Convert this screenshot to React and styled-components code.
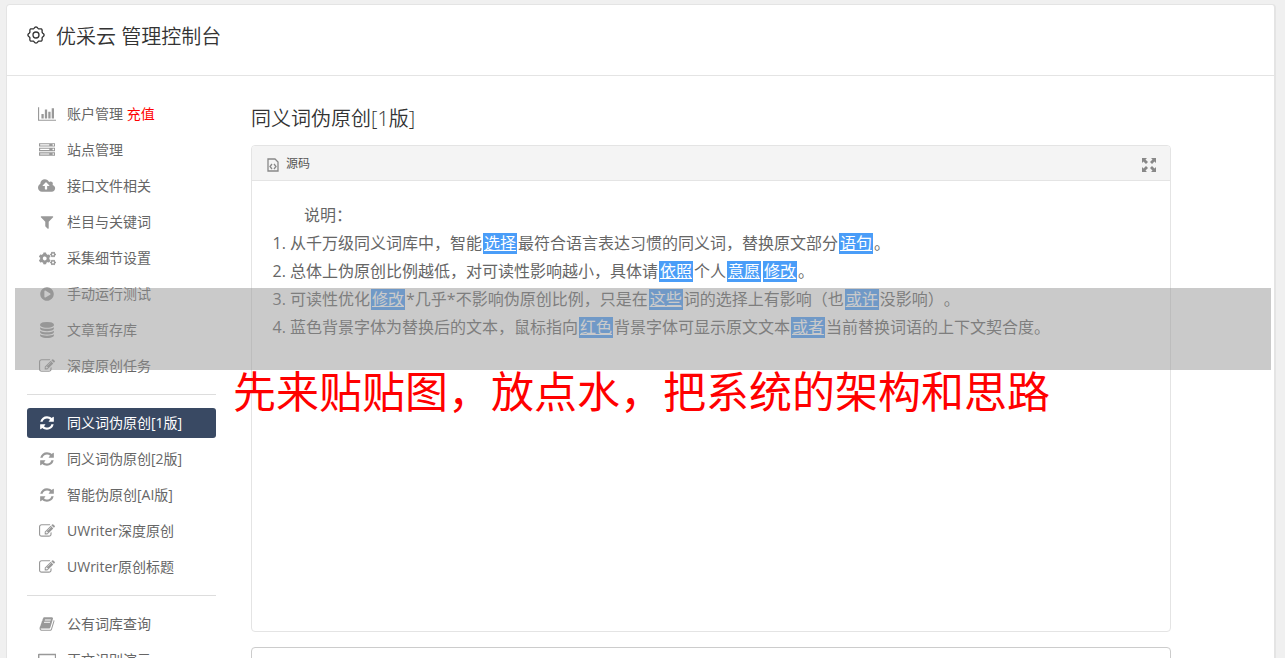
import styled, { createGlobalStyle } from "styled-components"
import { FaCogs, FaPlayCircle } from "react-icons/fa"

const icons = {
    chart: { w: 2048, d: "M640 896v512h-256v-512h256zm384-512v1024h-256v-1024h256zm1024 1152v128h-2048v-1536h128v1408h1920zm-640-896v768h-256v-768h256zm384-384v1152h-256v-1152h256z" },
    server: { w: 1792, d: "M128 1408h1024v-128h-1024v128zm0-512h1024v-128h-1024v128zm1568 448q0-40-28-68t-68-28-68 28-28 68 28 68 68 28 68-28 28-68zm-1568-960h1024v-128h-1024v128zm1568 448q0-40-28-68t-68-28-68 28-28 68 28 68 68 28 68-28 28-68zm0-512q0-40-28-68t-68-28-68 28-28 68 28 68 68 28 68-28 28-68zm96 832v384h-1792v-384h1792zm0-512v384h-1792v-384h1792zm0-512v384h-1792v-384h1792z" },
    upload: { w: 1920, d: "M1280 864q0-14-9-23l-352-352q-9-9-23-9t-23 9l-351 351q-10 12-10 24 0 14 9 23t23 9h224v352q0 13 9.5 22.5t22.5 9.5h192q13 0 22.5-9.5t9.5-22.5v-352h224q13 0 22.5-9.5t9.5-22.5zm640 288q0 159-112.5 271.5t-271.5 112.5h-1088q-185 0-316.5-131.5t-131.5-316.5q0-130 70-240t188-165q-2-30-2-43 0-212 150-362t362-150q156 0 285.5 87t188.5 231q71-62 166-62 106 0 181 75t75 181q0 76-41 138 130 31 213.5 135.5t83.5 238.5z" },
    filter: { w: 1792, d: "M1595 295q17 41-14 70l-493 493v742q0 42-39 59-13 5-25 5-27 0-45-19l-256-256q-19-19-19-45v-486l-493-493q-31-29-14-70 17-39 59-39h1280q42 0 59 39z" },
    database: { w: 1792, d: "M896 768q237 0 443-43t325-127v170q0 69-103 128t-280 93.5-385 34.5-385-34.5-280-93.5-103-128v-170q119 84 325 127t443 43zm0 768q237 0 443-43t325-127v170q0 69-103 128t-280 93.5-385 34.5-385-34.5-280-93.5-103-128v-170q119 84 325 127t443 43zm0-384q237 0 443-43t325-127v170q0 69-103 128t-280 93.5-385 34.5-385-34.5-280-93.5-103-128v-170q119 84 325 127t443 43zm0-1152q208 0 385 34.5t280 93.5 103 128v128q0 69-103 128t-280 93.5-385 34.5-385-34.5-280-93.5-103-128v-128q0-69 103-128t280-93.5 385-34.5z" },
    edit: { w: 1792, d: "M888 1184l116-116-152-152-116 116v56h96v96h56zm440-720q-16-16-33 1l-350 350q-17 17-1 33t33-1l350-350q17-17 1-33zm80 594v190q0 119-84.5 203.5t-203.5 84.5h-832q-119 0-203.5-84.5t-84.5-203.5v-832q0-119 84.5-203.5t203.5-84.5h832q63 0 117 25 15 7 18 23 3 17-9 29l-49 49q-14 14-32 8-23-6-45-6h-832q-66 0-113 47t-47 113v832q0 66 47 113t113 47h832q66 0 113-47t47-113v-126q0-13 9-22l64-64q15-15 35-7t20 29zm-96-738l288 288-672 672h-288v-288zm444 132l-92 92-288-288 92-92q28-28 68-28t68 28l152 152q28 28 28 68t-28 68z" },
    refresh: { w: 1792, d: "M1639 1056q0 5-1 7-64 268-268 434.5t-478 166.5q-146 0-282.5-55t-243.5-157l-129 129q-19 19-45 19t-45-19-19-45v-448q0-26 19-45t45-19h448q26 0 45 19t19 45-19 45l-137 137q71 66 161 102t187 36q134 0 250-65t186-179q11-17 53-117 8-23 30-23h192q13 0 22.5 9.5t9.5 22.5zm25-800v448q0 26-19 45t-45 19h-448q-26 0-45-19t-19-45 19-45l138-138q-148-137-349-137-134 0-250 65t-186 179q-11 17-53 117-8 23-30 23h-199q-13 0-22.5-9.5t-9.5-22.5v-7q65-268 270-434.5t480-166.5q146 0 284 55.5t245 156.5l130-129q19-19 45-19t45 19 19 45z" },
    book: { w: 1792, d: "M1703 478q40 57 18 129l-275 906q-19 64-76.5 107.5t-122.5 43.5h-923q-77 0-148.5-53.5t-99.5-131.5q-24-67-2-127 0-4 3-27t4-37q1-8-3-21.5t-3-19.5q2-11 8-21t16.5-23.5 16.5-23.5q23-38 45-91.5t30-91.5q3-10 .5-30t-.5-28q3-11 17-28t17-23q21-36 42-92t25-90q1-9-2.5-32t.5-28q4-13 22-30.5t22-22.5q19-26 42.5-84.5t27.5-96.5q1-8-3-25.5t-2-26.5q2-8 9-18t18-23 17-21q8-12 16.5-30.5t15-35 16-36 19.5-32 26.5-23.5 36-11.5 47.5 5.5l-1 3q38-9 51-9h761q74 0 114 56t18 130l-274 906q-36 119-71.5 153.5t-128.5 34.5h-869q-27 0-38 15-11 16-1 43 24 70 144 70h923q29 0 56-15.5t35-41.5l300-987q7-22 5-57 38 15 59 43zm-1064 2q-4 13 2 22.5t20 9.5h608q13 0 25.5-9.5t16.5-22.5l21-64q4-13-2-22.5t-20-9.5h-608q-13 0-25.5 9.5t-16.5 22.5zm-83 256q-4 13 2 22.5t20 9.5h608q13 0 25.5-9.5t16.5-22.5l21-64q4-13-2-22.5t-20-9.5h-608q-13 0-25.5 9.5t-16.5 22.5z" },
    desktop: { w: 2048, d: "M0 288q0-96 96-96h1856q96 0 96 96v1152q0 96-96 96h-1856q-96 0-96-96zM160 352v1024h1728v-1024z" },
}

const MenuIcon = ({ name }) => {
    if (name === "cogs") return <FaCogs size={17} />
    if (name === "play") return <FaPlayCircle size={14} />
    const { w, d } = icons[name]
    return (
        <svg width={(w / 1792) * 16} height={16} viewBox={`0 0 ${w} 1792`} fill="currentColor" fillRule={name === "desktop" ? "evenodd" : "nonzero"}>
            <path d={d} />
        </svg>
    )
}

const gearPoints = Array.from({ length: 96 }, (_, i) => {
    const a = (i / 96) * Math.PI * 2
    const r = 7.4 + 0.7 * Math.cos(a * 8)
    return `${(9 + r * Math.cos(a)).toFixed(2)},${(9 + r * Math.sin(a)).toFixed(2)}`
}).join(" ")

const menu = [
    [
        { icon: "chart", text: "账户管理", extra: "充值" },
        { icon: "server", text: "站点管理" },
        { icon: "upload", text: "接口文件相关" },
        { icon: "filter", text: "栏目与关键词" },
        { icon: "cogs", text: "采集细节设置" },
        { icon: "play", text: "手动运行测试" },
        { icon: "database", text: "文章暂存库" },
        { icon: "edit", text: "深度原创任务" },
    ],
    [
        { icon: "refresh", text: "同义词伪原创[1版]", active: true },
        { icon: "refresh", text: "同义词伪原创[2版]" },
        { icon: "refresh", text: "智能伪原创[AI版]" },
        { icon: "edit", text: "UWriter深度原创" },
        { icon: "edit", text: "UWriter原创标题" },
    ],
    [
        { icon: "book", text: "公有词库查询" },
        { icon: "desktop", text: "正文识别演示" },
    ],
]

const App = () => {
    return (
        <>
            <GlobalStyle />
            <Shell>
                <Header>
                    <svg width="18" height="18" viewBox="0 0 18 18" fill="none" stroke="currentColor" strokeWidth="1.3">
                        <polygon points={gearPoints} />
                        <circle cx="9" cy="9" r="3" />
                    </svg>
                    <h1>优采云 管理控制台</h1>
                </Header>
                <Content>
                    <Sidebar>
                        {menu.map((group, i) => (
                            <MenuGroup key={i}>
                                {group.map((item) => (
                                    <li key={item.text}>
                                        <MenuLink href="#" $active={item.active}>
                                            <IconBox><MenuIcon name={item.icon} /></IconBox>
                                            <MenuText>{item.text}{item.extra && <Extra> {item.extra}</Extra>}</MenuText>
                                        </MenuLink>
                                    </li>
                                ))}
                            </MenuGroup>
                        ))}
                    </Sidebar>
                    <Main>
                        <h2>同义词伪原创[1版]</h2>
                        <Editor>
                            <Toolbar>
                                <ToolButton type="button">
                                    <svg width="12" height="14" viewBox="0 0 12 14" fill="none" stroke="#888" strokeWidth="1.3">
                                        <path d="M1 1h7l3 3v9H1z" />
                                        <path d="M5 6L3 8.500L5 11M7 6l2 2.500L7 11" />
                                    </svg>
                                    源码
                                </ToolButton>
                                <ToolButton type="button" aria-label="全屏">
                                    <svg width="14" height="14" viewBox="0 0 14 14" fill="#888">
                                        <path d="M0 0h5L3.500 1.500L6 4L4 6L1.500 3.500L0 5zM14 0v5l-1.500-1.500L10 6L8 4l2.500-2.500L9 0zM0 14V9l1.500 1.500L4 8l2 2l-2.500 2.500L5 14zM14 14H9l1.500-1.500L8 10l2-2l2.500 2.500L14 9z" />
                                    </svg>
                                </ToolButton>
                            </Toolbar>
                            <Article>
                                <p>说明：</p>
                                <ol>
                                    <li>从千万级同义词库中，智能<Word>选择</Word>最符合语言表达习惯的同义词，替换原文部分<Word>语句</Word>。</li>
                                    <li>总体上伪原创比例越低，对可读性影响越小，具体请<Word>依照</Word>个人<Word>意愿</Word><Word>修改</Word>。</li>
                                    <li>可读性优化<Word>修改</Word>*几乎*不影响伪原创比例，只是在<Word>这些</Word>词的选择上有影响（也<Word>或许</Word>没影响）。</li>
                                    <li>蓝色背景字体为替换后的文本，鼠标指向<Word>红色</Word>背景字体可显示原文文本<Word>或者</Word>当前替换词语的上下文契合度。</li>
                                </ol>
                            </Article>
                        </Editor>
                        <ResultBox aria-label="结果" />
                    </Main>
                </Content>
            </Shell>
            <Banner>
                <BannerBand />
                <BannerText>先来贴贴图，放点水，把系统的架构和思路</BannerText>
            </Banner>
        </>
    )
}

const GlobalStyle = createGlobalStyle`
    html{
        scrollbar-width:none;
    }
    *{
        box-sizing:border-box;
    }
    body{
        margin:0;
        position:relative;
        background-color:#f0f0f0;
        color:#666;
        font-family:"Open Sans", "Noto Sans CJK SC", sans-serif;
        font-size:14px;
        text-spacing-trim:space-all;
    }
    h1, h2, p, ol, ul{
        margin:0;
        padding:0;
        font-weight:400;
    }
    h1, h2{
        color:#333;
        font-size:20px;
        font-weight:350;
    }
`

const Shell = styled.div`
    margin:4px 9px 0 6px;
    background-color:#fff;
    border:1px solid #e4e4e4;
    border-right-width:2px;
    border-bottom:none;
    border-radius:4px 4px 0 0;
    min-height:100vh;
`

const Header = styled.header`
    height:71px;
    padding:15px 20px 0;
    display:flex;
    align-items:flex-start;
    gap:11px;
    color:#333;
    border-bottom:1px solid #e4e4e4;
    svg{
        margin-top:6px;
    }
    h1{
        line-height:34px;
    }
`

const Content = styled.div`
    display:flex;
    gap:35px;
    padding:0 103px 0 20px;
`

const Sidebar = styled.nav`
    width:189px;
    flex-shrink:0;
    padding-top:23px;
`

const MenuGroup = styled.ul`
    list-style:none;
    display:flex;
    flex-direction:column;
    gap:6px;
    & + &{
        border-top:1px solid #ddd;
        margin-top:13px;
        padding-top:13px;
    }
`

const MenuLink = styled.a`
    height:30px;
    display:flex;
    align-items:center;
    border-radius:3px;
    text-decoration:none;
    white-space:nowrap;
    color:${({ $active }) => ($active ? "#fff" : "#666")};
    background-color:${({ $active }) => ($active ? "#394963" : "transparent")};
    svg{
        color:${({ $active }) => ($active ? "#fff" : "#999")};
    }
`

const MenuText = styled.span`
    padding-bottom:2px;
`

const IconBox = styled.span`
    width:40px;
    display:flex;
    justify-content:center;
`

const Extra = styled.span`
    color:#f00;
`

const Main = styled.main`
    flex:1;
    min-width:0;
    padding-top:30px;
    h2{
        line-height:26px;
        margin-bottom:13px;
    }
`

const Editor = styled.section`
    border:1px solid #e4e4e4;
    border-radius:4px;
    overflow:hidden;
`

const Toolbar = styled.div`
    height:35px;
    padding:0 14px 0 15px;
    display:flex;
    align-items:center;
    justify-content:space-between;
    background-color:#f4f4f4;
    border-bottom:1px solid #e4e4e4;
`

const ToolButton = styled.button`
    display:flex;
    align-items:center;
    gap:7px;
    padding:0;
    border:none;
    background:none;
    color:#555;
    font-family:inherit;
    font-size:12px;
    svg{
        margin-top:3px;
    }
`

const Article = styled.div`
    min-height:450px;
    padding:20px;
    font-size:16px;
    line-height:28px;
    p{
        text-indent:2em;
    }
    ol{
        padding-left:18px;
    }
`

const Word = styled.u`
    display:inline-block;
    line-height:21px;
    padding:0 1px;
    margin:0 1px;
    color:#fff;
    background-color:#4a9df8;
`

const ResultBox = styled.textarea`
    display:block;
    width:100%;
    height:200px;
    margin-top:15px;
    border:1px solid #ccc;
    border-radius:4px;
    resize:none;
`

/* strip laid over the page, with the slogan under it */
const Banner = styled.div`
    position:absolute;
    top:288px;
    left:15px;
    right:14px;
    pointer-events:none;
`

const BannerBand = styled.div`
    height:82px;
    background-color:rgba(150,150,150,0.5);
`

const BannerText = styled.p`
    padding-left:218px;
    color:#f00;
    font-size:43px;
    line-height:43px;
    white-space:nowrap;
`

export default App
